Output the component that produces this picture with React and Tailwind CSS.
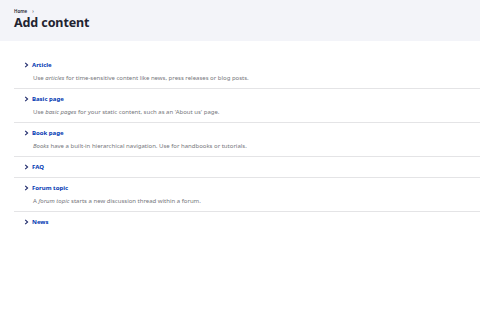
const items = [
  { title: 'Article', desc: <>Use <em>articles</em> for time-sensitive content like news, press releases or blog posts.</> },
  { title: 'Basic page', desc: <>Use <em>basic pages</em> for your static content, such as an 'About us' page.</> },
  { title: 'Book page', desc: <><em>Books</em> have a built-in hierarchical navigation. Use for handbooks or tutorials.</> },
  { title: 'FAQ' },
  { title: 'Forum topic', desc: <>A <em>forum topic</em> starts a new discussion thread within a forum.</> },
  { title: 'News' },
];

const Chevron = () => (
  <svg width="5" height="6" viewBox="0 0 5 6" className="shrink-0">
    <path d="M1.2 0.8 L3.6 3 L1.2 5.2" fill="none" stroke="#1f2a6b" strokeWidth="1.1" />
  </svg>
);

export default function App() {
  return (
    <div className="min-h-[316px] w-[480px] bg-white" style={{ fontFamily: '"Noto Sans", "Open Sans", sans-serif' }}>
      {/* Page header */}
      <div className="bg-[#f3f4f9] h-[41px] px-[14px] pt-[8px]">
        <div className="flex items-center gap-[5px] text-[4.5px] leading-[6px] font-semibold text-[#222330]">
          <span>Home</span>
          <span className="text-[#55565b]">›</span>
        </div>
        <h1 className="text-[12.5px] leading-[17px] font-bold text-[#222330] tracking-[-0.1px]">Add content</h1>
      </div>

      {/* Content type list */}
      <ul className="ml-[14px] mt-[14px]">
        {items.map((item, i) => (
          <li
            key={item.title}
            className={`pt-[6px] pb-[6px] ${i < items.length - 1 ? 'border-b border-[#e4e4e6]' : ''}`}
          >
            <div className="flex items-center gap-[3px] pl-[10px] h-[8px]">
              <Chevron />
              <span className="text-[6px] leading-[8px] font-bold text-[#0036b1]">{item.title}</span>
            </div>
            {item.desc && (
              <p className="mt-[5px] pl-[19px] text-[6px] leading-[8px] text-[#75767b]">{item.desc}</p>
            )}
          </li>
        ))}
      </ul>
    </div>
  );
}
